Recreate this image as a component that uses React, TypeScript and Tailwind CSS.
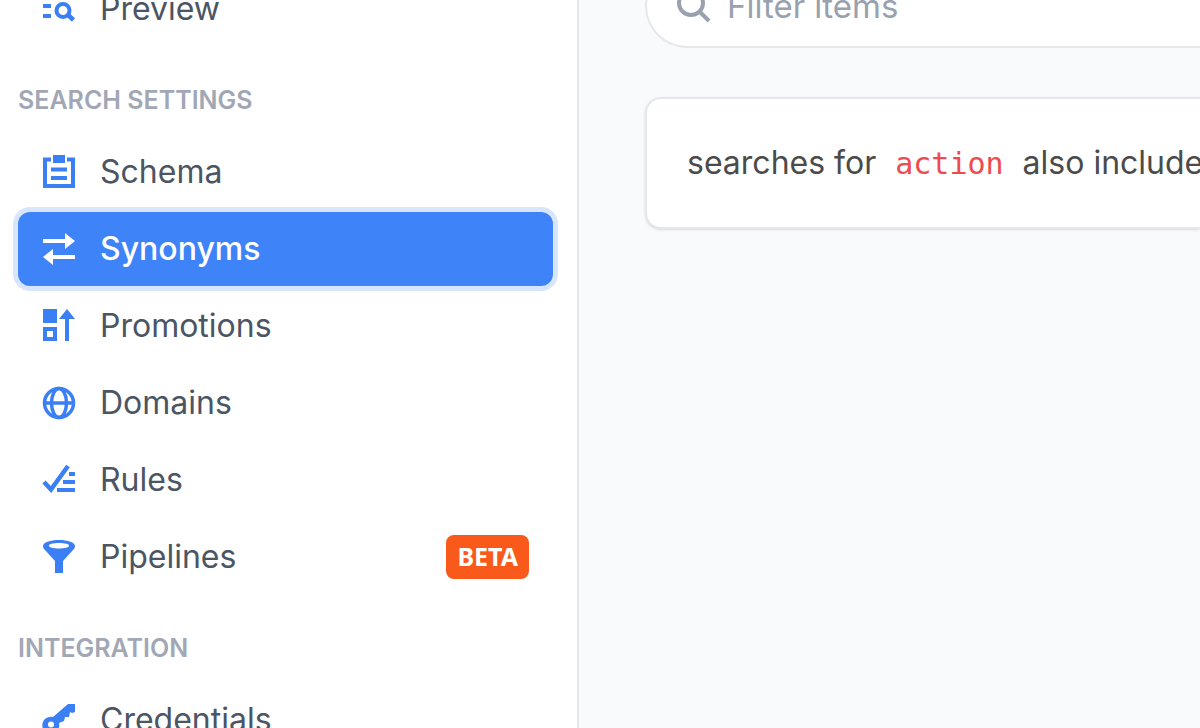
import type { ReactNode } from "react";

type NavItem = {
  label: string;
  icon: ReactNode;
  active?: boolean;
  badge?: string;
};

const previewIcon = (
  <Icon>
    <path fill="currentColor" d="M1 2h32v4H1zM1 12h8v4H1zM1 22h8v4H1z" />
    <circle cx="21" cy="18.500" r="6.500" fill="none" stroke="currentColor" strokeWidth="4" />
    <path d="M25.500 22.500l6 5.500" stroke="currentColor" strokeWidth="4.500" />
  </Icon>
);

const settingsItems: NavItem[] = [
  {
    label: "Schema",
    icon: (
      <Icon>
        <path d="M9 4.500H3v26.500h28V4.500h-6" fill="none" stroke="currentColor" strokeWidth="4" />
        <path fill="currentColor" d="M11 0h12v8H11zM9 12.500h16v4H9zM9 21h16v4H9z" />
      </Icon>
    ),
  },
  {
    label: "Synonyms",
    active: true,
    icon: (
      <Icon>
        <path fill="currentColor" d="M1 7h22V1l10 8-10 8v-6H1zM33 27H11v6L1 25l10-8v6h22z" />
      </Icon>
    ),
  },
  {
    label: "Promotions",
    icon: (
      <Icon>
        <path fill="currentColor" d="M1 0h14v14H1zM25 0l8 10h-6v22h-4V10h-6z" />
        <path d="M3 20h10v10H3z" fill="none" stroke="currentColor" strokeWidth="4" />
      </Icon>
    ),
  },
  {
    label: "Domains",
    icon: (
      <Icon>
        <g fill="none" stroke="currentColor" strokeWidth="3.500">
          <circle cx="17" cy="17" r="14.500" />
          <ellipse cx="17" cy="17" rx="7.500" ry="14.500" />
          <path d="M2 17h30" />
        </g>
      </Icon>
    ),
  },
  {
    label: "Rules",
    icon: (
      <Icon>
        <path d="M2 19l7 7.500L26 3" fill="none" stroke="currentColor" strokeWidth="4.500" />
        <path fill="currentColor" d="M27 9h6v4h-6zM21 17h12v4H21zM15 25h18v4H15z" />
      </Icon>
    ),
  },
  {
    label: "Pipelines",
    badge: "BETA",
    icon: (
      <Icon>
        <path
          fill="currentColor"
          fillRule="evenodd"
          d="M17 0c9 0 16 2.500 16 6 0 2-1 3-2 4L21 21v12h-8V21L3 10C2 9 1 8 1 6c0-3.500 7-6 16-6zm0 3C11 3 7 4 7 5.700S11 8.400 17 8.400s10-1 10-2.700S23 3 17 3z"
        />
      </Icon>
    ),
  },
];

const credentialsIcon = (
  <Icon>
    <path
      fill="currentColor"
      fillRule="evenodd"
      d="M26 1h7v8l-3 1-2-1-1 5-4 0-1 4-5 2a8.500 8.500 0 1 1-6-6zM9 18.500a3 3 0 1 0 0 6 3 3 0 0 0 0-6z"
    />
  </Icon>
);

export default function App() {
  return (
    <div className="flex h-screen overflow-hidden bg-[#f9fafb] font-[Inter,sans-serif]">
      <aside className="w-[579px] shrink-0 border-r-2 border-gray-200 bg-white pr-6 pl-[18px]">
        <nav className="-mt-7 flex flex-col">
          <NavList items={[{ label: "Preview", icon: previewIcon }]} />
          <NavHeading>SEARCH SETTINGS</NavHeading>
          <NavList items={settingsItems} />
          <NavHeading>INTEGRATION</NavHeading>
          <NavList items={[{ label: "Credentials", icon: credentialsIcon }]} />
        </nav>
      </aside>

      <main className="min-w-0 flex-1 pl-[66px]">
        <label className="-mt-9 flex h-[84px] items-center gap-4 rounded-l-full border-2 border-r-0 border-gray-200 bg-white pl-[30px]">
          <SearchIcon />
          <input
            type="search"
            aria-label="Filter items"
            placeholder="Filter items"
            className="min-w-0 flex-1 bg-transparent text-[33px] leading-10 outline-none placeholder:text-gray-400"
          />
        </label>

        <div className="mt-[49px] overflow-hidden rounded-l-2xl border-2 border-r-0 border-gray-200 bg-white py-11 pl-10 shadow-sm">
          <p className="text-[32px] leading-10 whitespace-nowrap text-[#4b4b4b]">
            searches for
            <code className="mx-[19px] font-['DejaVu_Sans_Mono',monospace] text-[30px] leading-none text-[#ef4a4f]">action</code>
            also includes
          </p>
        </div>
      </main>
    </div>
  );
}

function NavHeading({ children }: { children: ReactNode }) {
  return <h2 className="mt-9 mb-[17px] text-[25px] leading-9 font-semibold text-[#a1a7b5]">{children}</h2>;
}

function NavList({ items }: { items: NavItem[] }) {
  return (
    <ul className="flex flex-col gap-[3px]">
      {items.map((item) => (
        <li key={item.label}>
          <a
            href="#"
            aria-current={item.active ? "page" : undefined}
            className={
              item.active
                ? "flex h-[74px] items-center gap-6 rounded-xl bg-[#3f83f8] px-6 font-medium text-white ring-[5px] ring-[#d8e6fd]"
                : "flex h-[74px] items-center gap-6 rounded-xl px-6 text-[#4b5563]"
            }
          >
            <span className={item.active ? "text-white" : "text-[#3b7ff5]"}>{item.icon}</span>
            <span className="text-[32px] leading-10">{item.label}</span>
            {item.badge ? (
              <span className="ml-auto rounded-lg bg-[#f95a1b] px-[11px] pt-[3px] pb-[5px] font-['Noto_Sans',sans-serif] text-[25px] leading-9 font-bold text-white">
                {item.badge}
              </span>
            ) : null}
          </a>
        </li>
      ))}
    </ul>
  );
}

function Icon({ children }: { children: ReactNode }) {
  return (
    <svg viewBox="0 0 34 34" className="size-[34px]" aria-hidden="true">
      {children}
    </svg>
  );
}

function SearchIcon() {
  return (
    <svg viewBox="0 0 34 34" className="size-[34px] shrink-0 text-gray-400" fill="none" stroke="currentColor" strokeWidth="4" aria-hidden="true">
      <circle cx="14" cy="14" r="12" />
      <path d="M22 22l10 10" />
    </svg>
  );
}
